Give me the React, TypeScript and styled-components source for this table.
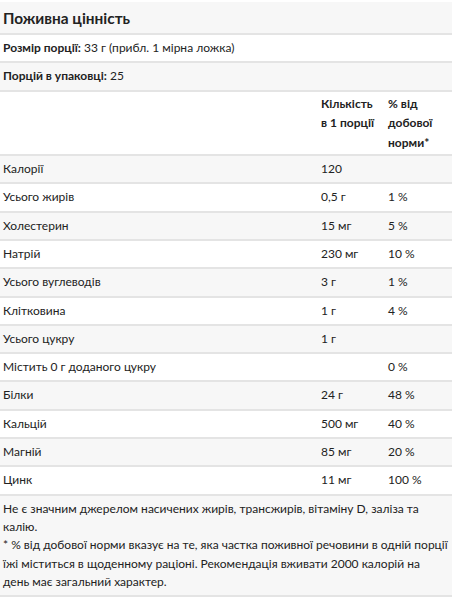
import React from "react";
import styled, { createGlobalStyle } from "styled-components";

const GlobalStyle = createGlobalStyle`
  body {
    margin: 0;
    background: #ffffff;
    font-family: Lato, "Noto Sans", sans-serif;
    color: #222222;
  }
`;

interface Nutrient {
  name: string;
  amount: string;
  daily: string;
}

// narrow no-break space between number and unit, as in the source
const s = "\u202F";

const nutrients: Nutrient[] = [
  { name: "Калорії", amount: "120", daily: "" },
  { name: "Усього жирів", amount: `0,5${s}г`, daily: `1${s}%` },
  { name: "Холестерин", amount: `15${s}мг`, daily: `5${s}%` },
  { name: "Натрій", amount: `230${s}мг`, daily: `10${s}%` },
  { name: "Усього вуглеводів", amount: `3${s}г`, daily: `1${s}%` },
  { name: "Клітковина", amount: `1${s}г`, daily: `4${s}%` },
  { name: "Усього цукру", amount: `1${s}г`, daily: "" },
  { name: `Містить 0${s}г доданого цукру`, amount: "", daily: `0${s}%` },
  { name: "Білки", amount: `24${s}г`, daily: `48${s}%` },
  { name: "Кальцій", amount: `500${s}мг`, daily: `40${s}%` },
  { name: "Магній", amount: `85${s}мг`, daily: `20${s}%` },
  { name: "Цинк", amount: `11${s}мг`, daily: `100${s}%` },
];

const App: React.FC = () => {
  return (
    <>
      <GlobalStyle />
      <Wrapper>
        <Table>
          <colgroup>
            <col style={{ width: 318 }} />
            <col style={{ width: 67 }} />
            <col style={{ width: 67 }} />
          </colgroup>
          <tbody>
            <Row $shaded>
              <TitleCell colSpan={3}>Поживна цінність</TitleCell>
            </Row>
            <Row>
              <Cell colSpan={3}>
                <b>Розмір порції:</b> 33{s}г (прибл. 1 мірна ложка)
              </Cell>
            </Row>
            <Row $shaded>
              <Cell colSpan={3}>
                <b>Порцій в упаковці:</b> 25
              </Cell>
            </Row>
            <Row>
              <Cell />
              <HeadCell>Кількість в{s}1 порції</HeadCell>
              <HeadCell>%{s}від добової норми*</HeadCell>
            </Row>
            {nutrients.map((n, i) => (
              <Row key={n.name} $shaded={i % 2 === 0}>
                <Cell>{n.name}</Cell>
                <Cell>{n.amount}</Cell>
                <Cell>{n.daily}</Cell>
              </Row>
            ))}
            <Row $shaded>
              <NoteCell colSpan={3}>
                Не є значним джерелом насичених жирів, трансжирів, вітаміну D,
                заліза та калію.
                <br />* % від добової норми вказує на те, яка частка поживної
                речовини в одній порції їжі міститься в щоденному раціоні.
                Рекомендація вживати 2000 калорій на день має загальний
                характер.
              </NoteCell>
            </Row>
          </tbody>
        </Table>
      </Wrapper>
    </>
  );
};

const Wrapper = styled.div`
  padding-top: 2px;
  width: 452px;
`;

const Table = styled.table`
  width: 452px;
  border-collapse: collapse;
  table-layout: fixed;
  font-size: 12px;
`;

const Row = styled.tr<{ $shaded?: boolean }>`
  background: ${(p) => (p.$shaded ? "#f7f7f7" : "#ffffff")};
  border-bottom: 2px solid #e4e4e4;
`;

const Cell = styled.td`
  padding: 4px 3px 4px 3px;
  line-height: 18.3px;
  vertical-align: top;
  text-align: left;

  b {
    font-weight: 700;
  }
`;

const TitleCell = styled.td`
  padding: 5px 3px 4px 3px;
  font-size: 15.4px;
  font-weight: 700;
  line-height: 22px;
`;

const HeadCell = styled.td`
  padding: 2px 3px 2px 3px;
  font-weight: 700;
  line-height: 19.5px;
  vertical-align: top;
`;

const NoteCell = styled.td`
  padding: 4px 3px 4px 3px;
  line-height: 18.3px;
`;

export default App;
